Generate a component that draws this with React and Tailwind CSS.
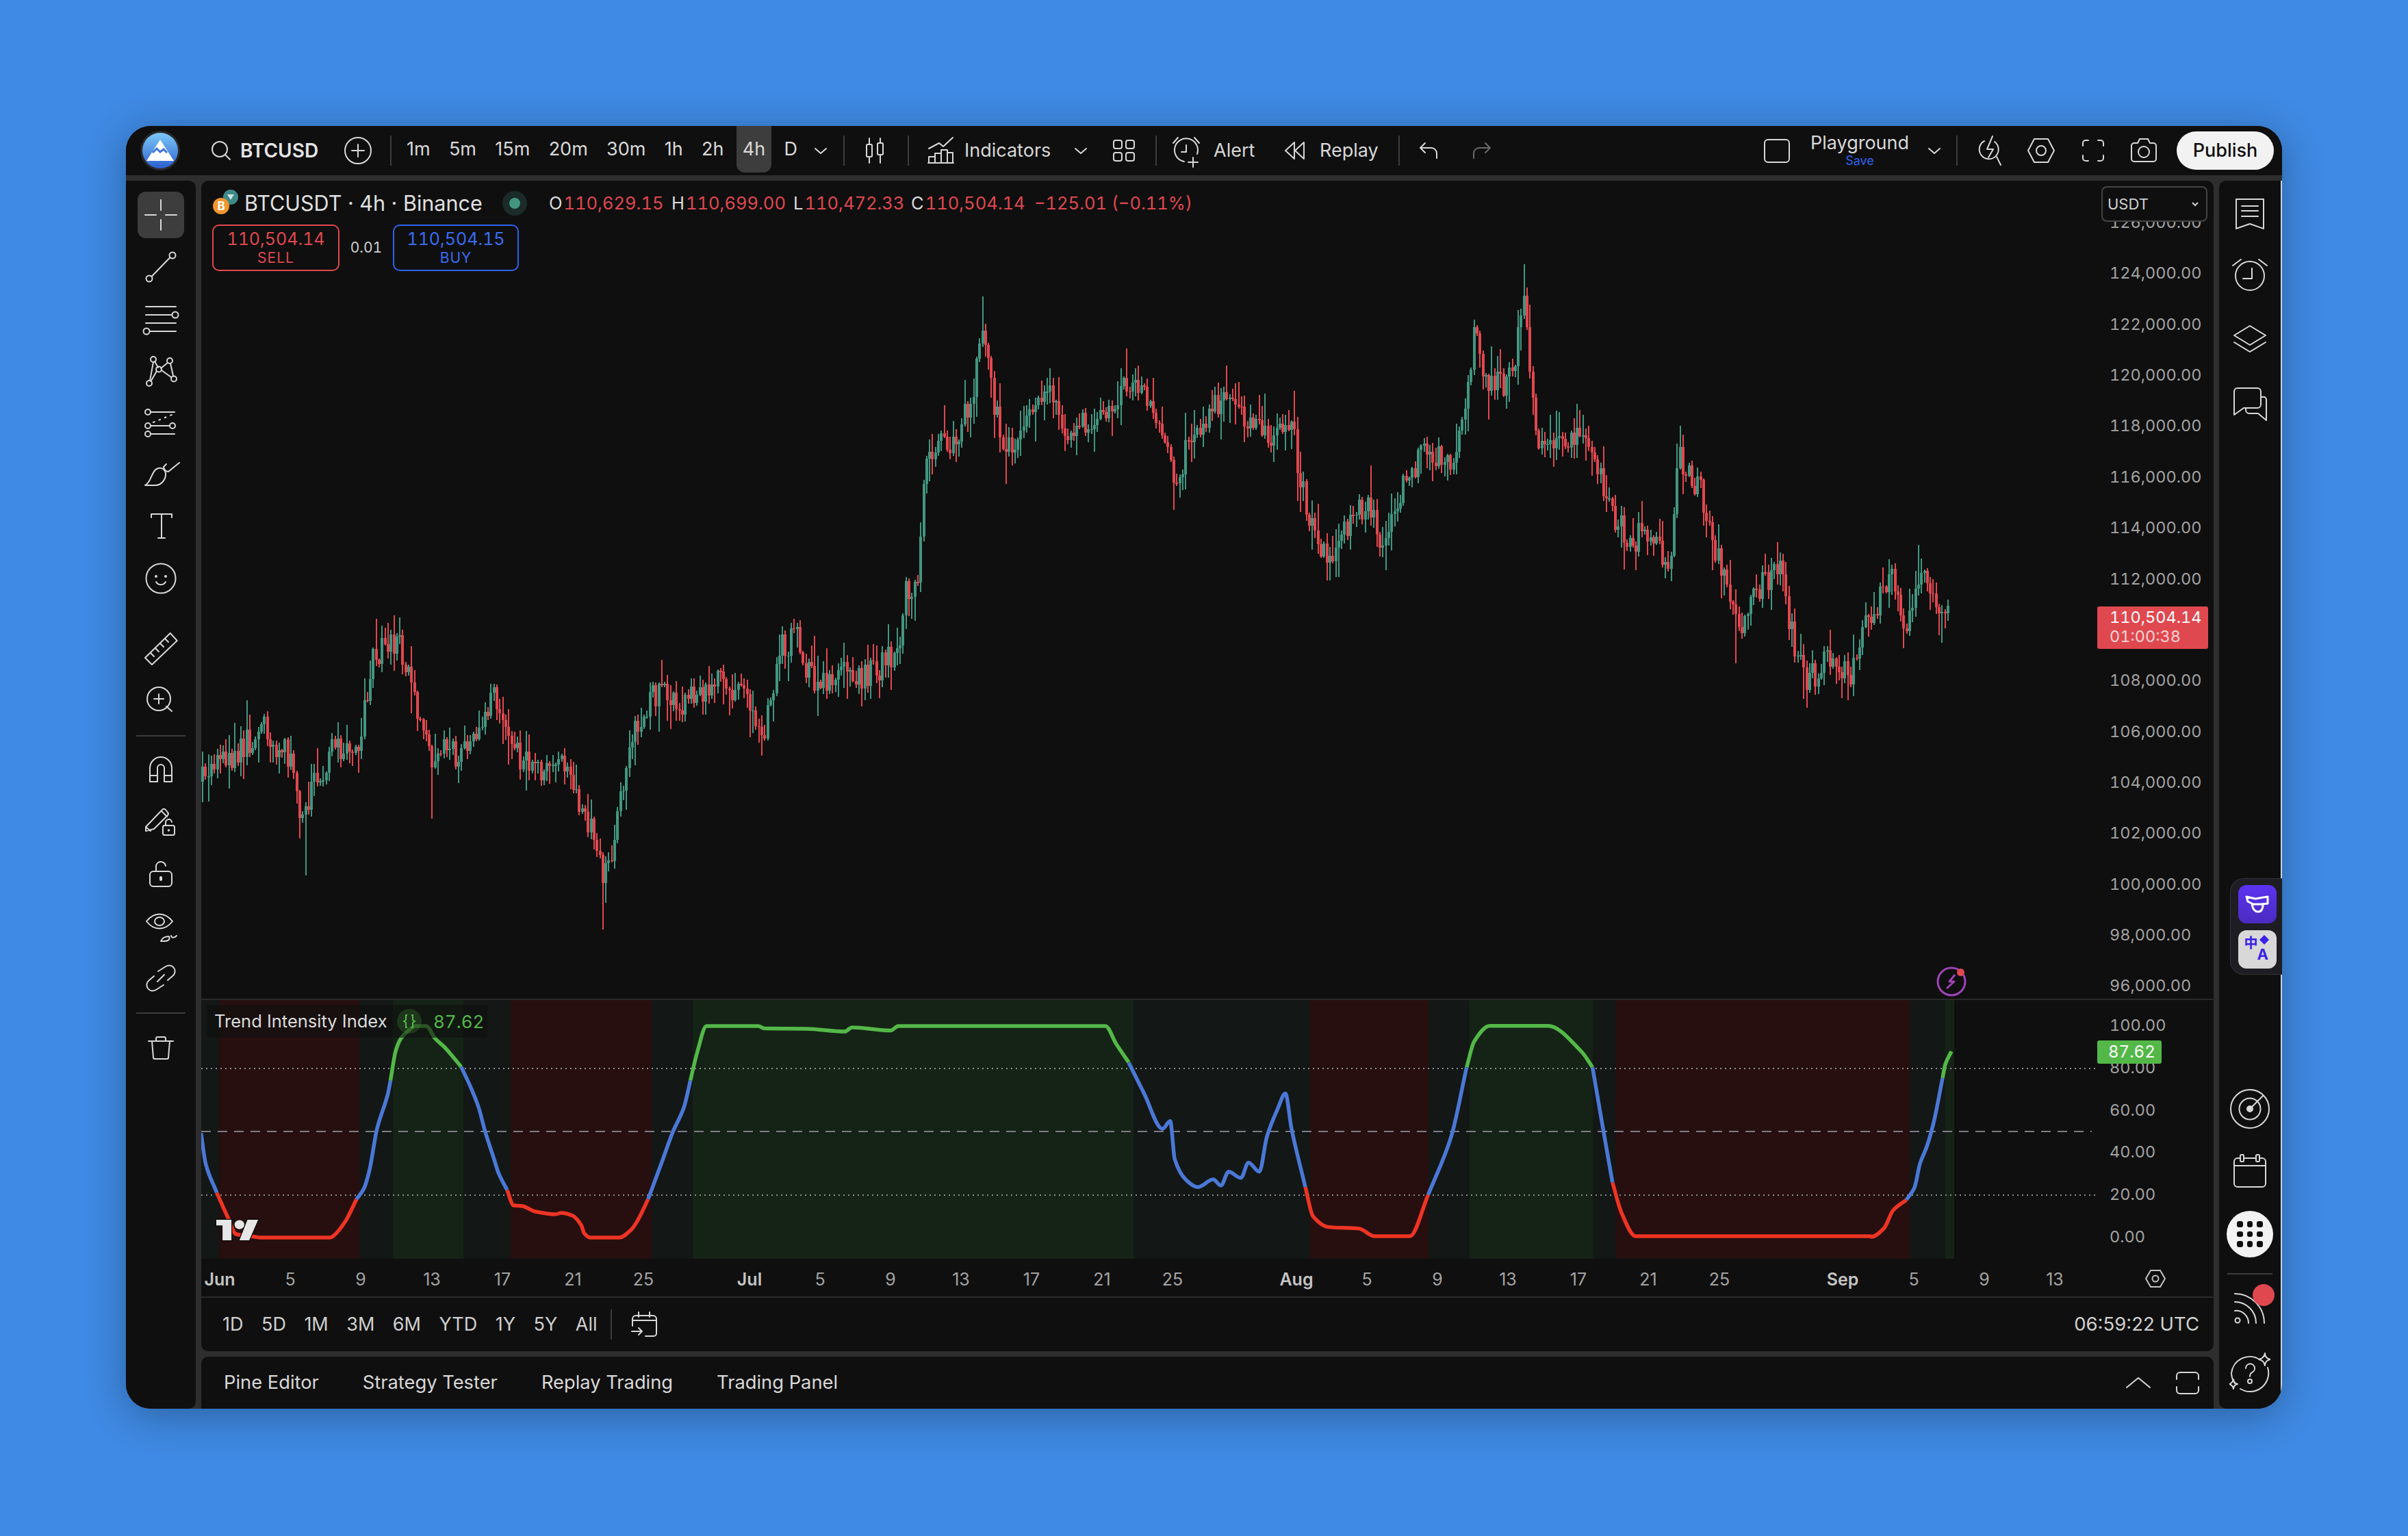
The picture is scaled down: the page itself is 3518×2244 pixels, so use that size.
import React from "react";

const S = 2.2436;
const ov = (pts) => pts.map(([x, y]) => [x * S, y * S]);

// rough price path, overview coords
const PATH = ov([
  [131, 510], [140, 495], [155, 490], [172, 475], [185, 490], [192, 505], [197, 540], [205, 510], [215, 490], [235, 480], [243, 425], [258, 415], [270, 450], [280, 497],
  [290, 490], [305, 490], [322, 450], [335, 490], [350, 500], [365, 495], [372, 515], [385, 540], [393, 575], [400, 555], [408, 490], [425, 450], [440, 458], [470, 445],
  [485, 450], [497, 480], [507, 425], [518, 415], [530, 445], [550, 440], [565, 440], [585, 425], [590, 385], [598, 380], [603, 290], [620, 288], [632, 265], [639, 210], [645, 250],
  [655, 298], [670, 265], [682, 250], [692, 280], [715, 275], [725, 258], [738, 250], [750, 265], [765, 315], [775, 285], [795, 260], [810, 275], [830, 285], [840, 270],
  [848, 320], [860, 355], [865, 368], [880, 340], [890, 330], [900, 350], [915, 315], [925, 295], [945, 300], [955, 265], [960, 218], [968, 255], [985, 245], [993, 195],
  [1000, 280], [1010, 290], [1030, 280], [1045, 320], [1060, 355], [1072, 345], [1088, 372], [1093, 298], [1110, 325], [1120, 370], [1132, 410], [1145, 385], [1158, 365],
  [1170, 430], [1178, 442], [1195, 428], [1205, 443], [1215, 405], [1232, 378], [1240, 410], [1250, 372], [1258, 395], [1270, 402],
]);

// long wicks that stick out of the path
const SPIKES = ov([
  [199, 570], [281, 533], [393, 606], [639, 193], [655, 315], [765, 332], [865, 378], [960, 208], [993, 172], [1093, 289], [1131, 432], [1175, 455], [1203, 456], [1249, 355],
  [245, 403], [172, 465], [517, 403], [497, 492], [1030, 270], [1158, 353],
]);

function priceAt(x) {
  for (let i = 1; i < PATH.length; i++) {
    if (x <= PATH[i][0]) {
      const [x0, y0] = PATH[i - 1];
      const [x1, y1] = PATH[i];
      return y0 + ((y1 - y0) * (x - x0)) / (x1 - x0);
    }
  }
  return PATH[PATH.length - 1][1];
}

function makeCandles() {
  let seed = 4711;
  const rnd = () => {
    seed = (seed * 16807) % 2147483647;
    return seed / 2147483647;
  };
  const out = [];
  let prev = priceAt(295);
  const n = Math.floor((2852 - 295) / 4.3);
  for (let i = 0; i < n; i++) {
    const x = 296 + i * 4.3;
    const close = priceAt(x) + (rnd() - 0.5) * 44;
    const open = prev;
    const top = Math.min(open, close);
    const bot = Math.max(open, close);
    let hi = top - rnd() * rnd() * 46 - 2;
    let lo = bot + rnd() * rnd() * 46 + 2;
    for (const [sx, sy] of SPIKES) {
      if (Math.abs(sx - x) < 2.2) {
        if (sy < top) hi = sy;
        else lo = sy;
      }
    }
    // keep the extremes inside the reference's range
    out.push({ x: Math.round(x), top, bot: Math.max(bot, top + 1.5), hi: Math.max(hi, 386), lo: Math.min(lo, 1358), up: close < open });
    prev = close;
  }
  return out;
}
const candles = makeCandles();

// monotone cubic through the points: smooth, but flats stay flat
function smooth(pts) {
  const s = [];
  for (let i = 0; i < pts.length - 1; i++) s.push((pts[i + 1][1] - pts[i][1]) / (pts[i + 1][0] - pts[i][0]));
  const m = pts.map((_, i) => {
    if (i === 0) return s[0];
    if (i === pts.length - 1) return s[s.length - 1];
    if (s[i - 1] * s[i] <= 0) return 0;
    return (2 * s[i - 1] * s[i]) / (s[i - 1] + s[i]);
  });
  let d = `M${pts[0][0]} ${pts[0][1]}`;
  for (let i = 0; i < pts.length - 1; i++) {
    const dx = (pts[i + 1][0] - pts[i][0]) / 3;
    d += ` C${pts[i][0] + dx} ${pts[i][1] + m[i] * dx} ${pts[i + 1][0] - dx} ${pts[i + 1][1] - m[i + 1] * dx} ${pts[i + 1][0]} ${pts[i + 1][1]}`;
  }
  return d;
}

const GREEN = "#54b848";
const BLUE = "#4a78d6";
const RED = "#ee3424";

const LINE = [
  [BLUE, [[293.7, 1655.5], [300.7, 1701], [316.7, 1742.5]]],
  [RED, [[316.7, 1742.5], [332.6, 1778], [345, 1803], [372.8, 1807], [380.5, 1808], [482.5, 1808], [488.9, 1804], [504.8, 1784], [511.2, 1772], [520.8, 1752]]],
  [BLUE, [[520.8, 1752], [531.6, 1736.6], [539.9, 1709], [550.7, 1649.6], [566.7, 1598], [570.5, 1578.4]]],
  [GREEN, [[570.5, 1578.4], [578.2, 1535], [585.8, 1517], [597.3, 1505], [606.9, 1499], [622.8, 1499], [635.6, 1517], [649.6, 1530], [661, 1543], [673.8, 1558.6]]],
  [BLUE, [[673.8, 1558.6], [686.6, 1586], [699.3, 1618], [708.9, 1653.5], [721.7, 1693], [728, 1713], [740.8, 1738.5]]],
  [RED, [[740.8, 1738.5], [750.4, 1761], [763.1, 1762], [782.2, 1770], [811, 1774], [820.5, 1772], [836.5, 1776], [849.2, 1790], [853.7, 1802], [862, 1808], [904.7, 1808], [922.6, 1796], [932.1, 1782], [946.8, 1752]]],
  [BLUE, [[946.8, 1752], [967.2, 1697], [983.1, 1653.5], [999.1, 1618], [1008.7, 1578.4]]],
  [GREEN, [[1008.7, 1578.4], [1018.2, 1539], [1032.2, 1499], [1107.5, 1499], [1117, 1502.5], [1178, 1503], [1234, 1507], [1245, 1501], [1301, 1505.5], [1312.5, 1499], [1615, 1499], [1631, 1525.6], [1649, 1552]]],
  [BLUE, ov([[735, 692], [745, 712], [757, 735], [762, 730], [765, 755], [772, 768], [780, 773], [790, 768], [795, 772], [800, 763], [808, 767], [813, 757], [820, 763], [825, 740], [832, 722], [837, 712], [841, 735], [850, 773]])],
  [RED, ov([[850, 773], [855, 792], [865, 799], [885, 800], [895, 805], [918, 805], [930, 778]])],
  [BLUE, ov([[930, 778], [945, 740], [955, 695]])],
  [GREEN, ov([[955, 695], [960, 678], [970, 668], [1008, 668], [1030, 685], [1037, 695]])],
  [BLUE, ov([[1037, 695], [1043, 730], [1050, 770]])],
  [RED, [...ov([[1050, 770], [1056, 790], [1065, 805], [1218, 805]]), [2734, 1807], [2752, 1795], [2766, 1768], [2785, 1753]]],
  [BLUE, [[2785, 1753], [2797, 1735], [2805, 1700], [2815, 1675], [2825, 1640], [2838, 1575]]],
  [GREEN, [[2838, 1575], [2842, 1555], [2851, 1536]]],
];

const N = "#131716";
const R = "#270f0f";
const G = "#152316";
const BANDS = [
  [294, 320.5, N], [320.5, 525, R], [525, 574, N], [574, 677, G], [677, 746, N], [746, 952, R], [952, 1012, N], [1012, 1656, G], [1656, 1914, N], [1914, 2087, R],
  [2087, 2147, N], [2147, 2327, G], [2327, 2360, N], [2360, 2790, R], [2790, 2842, N], [2842, 2855, G],
];

// the 110,000.00 slot sits under the live price tag
const PRICES = ["126,000.00", "124,000.00", "122,000.00", "120,000.00", "118,000.00", "116,000.00", "114,000.00", "112,000.00", "", "108,000.00", "106,000.00", "104,000.00", "102,000.00", "100,000.00", "98,000.00", "96,000.00"];

const TIME = [
  ["Jun", 321, true], ["5", 424], ["9", 527], ["13", 631], ["17", 734], ["21", 837], ["25", 940], ["Jul", 1095, true], ["5", 1198], ["9", 1301], ["13", 1404], ["17", 1507], ["21", 1610], ["25", 1713],
  ["Aug", 1894, true], ["5", 1997], ["9", 2100], ["13", 2203], ["17", 2306], ["21", 2408], ["25", 2512], ["Sep", 2692, true], ["5", 2796], ["9", 2899], ["13", 3002],
];

// all icons: 60x60 box, origin in the middle, units are screen px
function Ico({ children, stroke = "#d8d8d8", sw = 2 }) {
  return (
    <svg className="w-[60px] h-[60px] shrink-0" viewBox="-30 -30 60 60" fill="none" stroke={stroke} strokeWidth={sw} strokeLinecap="round" strokeLinejoin="round">
      {children}
    </svg>
  );
}
const Chevron = () => (
  <Ico>
    <path d="M-8 -3 L0 4 L8 -3" />
  </Ico>
);
const Divider = () => <div className="w-[2px] h-[44px] bg-[#3c3c3c] shrink-0" />;

function OHLC({ l, v, cls }) {
  return (
    <div className={cls}>
      <span className="text-[#dcdcdc]">{l}</span>
      <span className="text-[#e0484f] tabular-nums">{v}</span>
    </div>
  );
}

function Header() {
  return (
    <div className="h-[72px] shrink-0 flex items-center bg-[#0f0f0f] pl-[20px] pr-[12px] text-[27px] text-[#d8d8d8]">
      <svg className="w-[60px] h-[60px] shrink-0" viewBox="-30 -30 60 60">
        <defs>
          <linearGradient id="lg" x1="0" y1="0" x2="0" y2="1">
            <stop offset="0" stopColor="#7cc9f8" />
            <stop offset="1" stopColor="#2c5fd0" />
          </linearGradient>
        </defs>
        <circle r="29" fill="#2a2a2a" />
        <circle r="26" fill="url(#lg)" />
        <path d="M0 -16 L-20 15 H20 Z" fill="#fff" />
        <path d="M-11 3 L-5 -3 L0 2 L5 -2 L10 3" fill="none" stroke="#3c74dc" strokeWidth="3" />
      </svg>
      <div className="ml-[29px]">
        <Ico>
          <circle cx="-2" cy="-2" r="11" />
          <path d="M6 6 L13 13" />
        </Ico>
      </div>
      <span className="ml-[-2px] w-[114px] font-semibold text-[28px] text-[#e4e4e4]">BTCUSD</span>
      <div className="ml-[28px]">
        <Ico>
          <circle r="19" />
          <path d="M-9 0 H9 M0 -9 V9" />
        </Ico>
      </div>
      <div className="ml-[17px]"><Divider /></div>
      <div className="ml-[13px] w-[587px] shrink-0 h-[72px] flex items-start gap-[9.3px]">
        {["1m", "5m", "15m", "20m", "30m", "1h", "2h", "4h", "D"].map((t) => (
          <div key={t} className={"h-[68px] px-[9px] flex items-center rounded-b-[12px] " + (t === "4h" ? "bg-[#3d3d3d]" : "")}>
            {t}
          </div>
        ))}
      </div>
      <div className="ml-[-3px]"><Chevron /></div>
      <div className="ml-[3px]"><Divider /></div>
      <div className="ml-[14px]">
        <Ico>
          <path d="M-8 -18 V-9 M-8 9 V18 M8 -18 V-11 M8 6 V18" />
          <rect x="-12" y="-9" width="8" height="18" rx="1.5" />
          <rect x="4" y="-11" width="8" height="17" rx="1.5" />
        </Ico>
      </div>
      <div className="ml-[18px]"><Divider /></div>
      <div className="ml-[16px]">
        <Ico>
          <path d="M-17 -3 L-2 -11 L4 -6 L18 -19" />
          <path d="M-18 18 H19 M-17 18 V9 H-8 V18 M-8 18 V4 H1 V18 M1 18 V-1 H10 V18 M10 18 V3 H18 V18" />
        </Ico>
      </div>
      <span className="ml-[5px] w-[128px] whitespace-nowrap">Indicators</span>
      <div className="ml-[12px]"><Chevron /></div>
      <div className="ml-[3px]">
        <Ico>
          <rect x="-15" y="-15" width="12" height="12" rx="3" />
          <rect x="3" y="-15" width="12" height="12" rx="3" />
          <rect x="-15" y="3" width="12" height="12" rx="3" />
          <rect x="3" y="3" width="12" height="12" rx="3" />
        </Ico>
      </div>
      <div className="ml-[16px]"><Divider /></div>
      <div className="ml-[13px]">
        <Ico>
          <path d="M-3 16 A17 17 0 1 1 16 5" />
          <path d="M0 -8 V2 H-7" />
          <path d="M-19 -11 L-12 -19 M19 -11 L12 -19" />
          <path d="M10 10 V24 M3 17 H17" />
        </Ico>
      </div>
      <span className="ml-[10px] w-[61px]">Alert</span>
      <div className="ml-[28px]">
        <Ico>
          <path d="M-1 -12 L-14 0 L-1 12 Z M13 -12 L0 0 L13 12 Z" />
        </Ico>
      </div>
      <span className="ml-[6px] w-[87px]">Replay</span>
      <div className="ml-[28px]"><Divider /></div>
      <div className="ml-[12px]">
        <Ico>
          <path d="M-5 -11 L-12 -4 L-5 3 M-12 -4 H4 A8 8 0 0 1 12 4 V11" />
        </Ico>
      </div>
      <div className="ml-[18px]">
        <Ico stroke="#6a6a6a">
          <path d="M5 -11 L12 -4 L5 3 M12 -4 H-4 A8 8 0 0 0 -12 4 V11" />
        </Ico>
      </div>

      <div className="ml-auto flex items-center">
        <Ico>
          <rect x="-18" y="-16" width="36" height="33" rx="5" />
        </Ico>
        <div className="ml-[19px] w-[144px] flex flex-col items-center leading-none">
          <span className="text-[27px] mt-[-1px]">Playground</span>
          <span className="text-[18px] text-[#2f62f0] mt-[4px]">Save</span>
        </div>
        <div className="ml-[7px]"><Chevron /></div>
        <div className="ml-[2px]"><Divider /></div>
        <div className="ml-[18px]">
          <Ico>
            <path d="M6 -13 A14 14 0 1 1 -9 -14" />
            <path d="M9 9 L15 21" />
            <path d="M3 -21 L-5 -2 H4 L-3 10" />
          </Ico>
        </div>
        <div className="ml-[14px]">
          <Ico>
            <path d="M-19 0 L-10 -17 H10 L19 0 L10 17 H-10 Z" />
            <circle r="7" />
          </Ico>
        </div>
        <div className="ml-[16px]">
          <Ico>
            <path d="M-15 -7 V-11 A4 4 0 0 1 -11 -15 H-7 M7 -15 H11 A4 4 0 0 1 15 -11 V-7 M15 7 V11 A4 4 0 0 1 11 15 H7 M-7 15 H-11 A4 4 0 0 1 -15 11 V7" />
          </Ico>
        </div>
        <div className="ml-[14px]">
          <Ico>
            <path d="M-9 -11 L-6 -17 H6 L9 -11 H14 A4 4 0 0 1 18 -7 V12 A4 4 0 0 1 14 16 H-14 A4 4 0 0 1 -18 12 V-7 A4 4 0 0 1 -14 -11 Z" />
            <circle cy="2" r="8" />
          </Ico>
        </div>
        <div className="ml-[18px] w-[142px] h-[56px] rounded-full bg-[#f2f2f2] text-[#0f0f0f] flex items-center justify-center font-medium">Publish</div>
      </div>
    </div>
  );
}

function LeftBar() {
  const Slot = ({ cls, children }) => <div className={"flex items-center justify-center " + cls}>{children}</div>;
  const s = "h-[75.9px]";
  const m = "h-[73px]";
  const l = "h-[76.25px]";
  const Sep = ({ cls }) => <div className={"w-[72px] h-[2px] bg-[#3c3c3c] self-center " + cls} />;
  return (
    <div className="w-[102px] shrink-0 bg-[#0f0f0f] rounded-r-[10px] flex flex-col pt-[12px]">
      <Slot cls={s}>
        <div className="w-[68px] h-[68px] rounded-[12px] bg-[#3d3d3d] flex items-center justify-center">
          <Ico>
            <path d="M0 -22 V-7 M0 7 V22 M-23 0 H-7 M7 0 H23" />
          </Ico>
        </div>
      </Slot>
      <Slot cls={s}>
        <Ico>
          <circle cx="17" cy="-17" r="4.5" />
          <circle cx="-17" cy="17" r="4.5" />
          <path d="M-13.5 14 L13.5 -14" />
        </Ico>
      </Slot>
      <Slot cls={s}>
        <Ico>
          <path d="M-22 -18 H22 M-22 -6 H16 M-22 6 H22 M-16 18 H22" />
          <circle cx="21" cy="-6" r="4.5" />
          <circle cx="-21" cy="18" r="4.5" />
        </Ico>
      </Slot>
      <Slot cls={s}>
        <Ico>
          <path d="M-11 -13 L-16 14 M-9 -14 L-4 -5 M0 -4 L10 -12 M14 -11 L18 7 M1 -1 L15 9 M-6 0 L-14 14" />
          <circle cx="-11" cy="-17" r="4" />
          <circle cx="13" cy="-15" r="4" />
          <circle cx="-3" cy="-2.5" r="4" />
          <circle cx="-17" cy="18" r="4" />
          <circle cx="19" cy="11.5" r="4" />
        </Ico>
      </Slot>
      <Slot cls={s}>
        <Ico>
          <circle cx="-19" cy="-16" r="4" />
          <circle cx="-19" cy="4" r="4" />
          <circle cx="17" cy="4" r="4" />
          <circle cx="-19" cy="16" r="4" />
          <path d="M-15 -16 H20 M-15 4 H13 M-15 16 H20" />
          <path d="M-11 -1 L16 -12" strokeDasharray="2 7" />
        </Ico>
      </Slot>
      <Slot cls={s}>
        <Ico>
          <path d="M-23 16 C-14 12 -14 -4 -6 -8 C2 -12 6 -6 7 -2 C8 8 0 16 -8 16 Z" />
          <path d="M8 -15 L4 -11 C5 -5 8 -4 11 -4 L27 -17" />
        </Ico>
      </Slot>
      <Slot cls={s}>
        <Ico>
          <path d="M-14 -13 V-18 H16 V-13 M1 -18 V17 M-4 17 H6" />
        </Ico>
      </Slot>
      <Slot cls={s}>
        <Ico>
          <circle r="21.5" />
          <circle cx="-7" cy="-3" r="1" fill="#d8d8d8" />
          <circle cx="7" cy="-3" r="1" fill="#d8d8d8" />
          <path d="M-7 5 A8 8 0 0 0 7 5" />
        </Ico>
      </Slot>

      <Slot cls={m + " mt-[28px]"}>
        <Ico>
          <path d="M13.7 -23 L23.7 -12 L-13 23 L-23 13 Z" />
          <path d="M-15 6 L-10 11 M-8 -1 L-3 4 M-1 -8 L4 -3 M6 -15 L11 -10" />
        </Ico>
      </Slot>
      <Slot cls={m}>
        <Ico>
          <circle cx="-3" r="17" />
          <path d="M-10 0 H4 M-3 -7 V7 M8 11 L16 18" />
        </Ico>
      </Slot>
      <Sep cls="mt-[17px]" />
      <Slot cls={l + " mt-[10px]"}>
        <Ico>
          <path d="M-16 18 V-2 A16 16 0 0 1 16 -2 V18 H5 V-2 A5 5 0 0 0 -5 -2 V18 Z M-16 9 H-5 M5 9 H16" />
        </Ico>
      </Slot>
      <Slot cls={l}>
        <Ico>
          <path d="M-22 7 L2 -18 A3 3 0 0 1 7 -18 L10 -14 A3 3 0 0 1 10 -10 L-10 10 L-22 13 Z M-22 7 L-15 13 M1 -16 L9 -8" />
          <rect x="3" y="5" width="17" height="14" rx="2.5" />
          <path d="M7 5 V1 A4.5 4.5 0 0 1 16 0" />
          <circle cx="11.5" cy="12" r="0.8" />
        </Ico>
      </Slot>
      <Slot cls={l}>
        <Ico>
          <rect x="-16" y="-4" width="32" height="22" rx="5" />
          <path d="M-7 -4 V-10 A7 7 0 0 1 7 -12" />
          <path d="M0 5 V8" strokeWidth="4" />
        </Ico>
      </Slot>
      <Slot cls={l}>
        <Ico>
          <path d="M-21 -7 C-10 -21 6 -21 17 -7 C6 7 -10 7 -21 -7 Z" />
          <ellipse cx="-2" cy="-7" rx="7" ry="6" />
          <path d="M0 22 C2 17 6 15 12 15 C14 20 10 22 5 22 Z M15 14 C16 18 20 17 23 14" />
        </Ico>
      </Slot>
      <Slot cls={l}>
        <Ico>
          <path d="M-10 -3 L-17 3 A8.5 8.5 0 0 0 -7 17 L4 10 M10 3 L17 -3 A8.5 8.5 0 0 0 7 -17 L-4 -10 M-5 5 L5 -5" />
        </Ico>
      </Slot>
      <Sep cls="mt-[12px]" />
      <Slot cls="h-[76px] mt-[9px]">
        <Ico>
          <path d="M-18 -7 H18 M-13 -7 L-11 17 A2 2 0 0 0 -9 19 H9 A2 2 0 0 0 11 17 L13 -7 M-7 -7 V-11 A2 2 0 0 1 -5 -13 H5 A2 2 0 0 1 7 -11 V-7" />
        </Ico>
      </Slot>
    </div>
  );
}

function MainPane() {
  return (
    <div className="h-[1195px] shrink-0 flex relative overflow-hidden">
      <div className="w-[2772px] shrink-0 relative">
        <svg className="w-[2772px] h-[1195px] block" viewBox="294 264 2772 1195" shapeRendering="crispEdges">
          {candles.map((c, i) => (
            <g key={i} fill={c.up ? "#429681" : "#e0484f"}>
              <rect x={c.x - 1} y={c.hi} width="2" height={c.lo - c.hi} />
              <rect x={c.x - 2} y={c.top} width="4" height={c.bot - c.top} />
            </g>
          ))}
        </svg>

        <div className="absolute left-[16px] top-[12px] h-[42px] flex items-center whitespace-nowrap">
          <svg className="w-[44px] h-[44px] shrink-0" viewBox="0 0 44 44">
            <circle cx="27" cy="13" r="11" fill="#3f8a88" />
            <path d="M22 9 H32 L27 17 Z" fill="#cfe8e6" />
            <circle cx="13" cy="26" r="12" fill="#f0962e" />
            <text x="13" y="32" fontSize="17" fontWeight="700" textAnchor="middle" fill="#fff" fontFamily="Inter, sans-serif">B</text>
          </svg>
          <span className="ml-[3px] w-[346px] text-[30.5px] text-[#e0e0e0]">BTCUSDT · 4h · Binance</span>
          <div className="ml-[31px] w-[36px] h-[36px] rounded-full bg-[#1a2b28] flex items-center justify-center">
            <div className="w-[16px] h-[16px] rounded-full bg-[#429681]" />
          </div>
          <div className="ml-[32px] flex text-[25.5px] items-center">
            <OHLC l="O" v="110,629.15" cls="flex gap-[2px] w-[179px]" />
            <OHLC l="H" v="110,699.00" cls="flex gap-[2px] w-[178px]" />
            <OHLC l="L" v="110,472.33" cls="flex gap-[2px] w-[172px]" />
            <OHLC l="C" v="110,504.14" cls="flex gap-[2px] w-[180px]" />
            <span className="text-[#e0484f] tabular-nums">−125.01 (−0.11%)</span>
          </div>
        </div>

        <div className="absolute left-[16px] top-[64px] flex items-center tabular-nums">
          <div className="w-[186px] h-[68px] rounded-[10px] border-2 border-[#e0484f] text-[#e0484f] flex flex-col items-center justify-center leading-none">
            <span className="text-[25px]">110,504.14</span>
            <span className="text-[21px] mt-[4px] tracking-[1px]">SELL</span>
          </div>
          <span className="w-[78px] text-center text-[21px] text-[#cfcfcf]">0.01</span>
          <div className="w-[184px] h-[68px] rounded-[10px] border-2 border-[#2f62f0] text-[#3a6cf4] flex flex-col items-center justify-center leading-none">
            <span className="text-[25px]">110,504.15</span>
            <span className="text-[21px] mt-[4px] tracking-[1px]">BUY</span>
          </div>
        </div>

        <svg className="absolute left-[2529px] top-[1142px] w-[56px] h-[56px]" viewBox="-28 -28 56 56" fill="none">
          <circle r="20" stroke="#9c44b5" strokeWidth="3" />
          <path d="M5 -10 L-3 0 H4 L-7 10 M-6 -1" stroke="#9c44b5" strokeWidth="3" strokeLinejoin="round" />
          <circle cx="13.5" cy="-13.5" r="5.5" fill="#e0484f" />
        </svg>
      </div>

      <div className="flex-1 pt-[23.5px] pl-[16px] text-[23.5px] tabular-nums text-[#a3a3a3]">
        {PRICES.map((p, i) => (
          <div key={i} className="h-[74.36px] flex items-center">{p}</div>
        ))}
      </div>

      <div className="absolute left-[2776px] top-[8px] w-[155px] h-[52px] rounded-[8px] border-2 border-[#444444] bg-[#0f0f0f] flex items-center justify-between pl-[7px] pr-[4px] text-[22px] text-[#cfcfcf]">
        USDT
        <svg className="w-[24px] h-[24px]" viewBox="-12 -12 24 24" fill="none" stroke="#cfcfcf" strokeWidth="2">
          <path d="M-4 -2 L0 2 L4 -2" />
        </svg>
      </div>
      <div className="absolute left-[2770px] top-[622px] w-[162px] h-[62px] rounded-[3px] bg-[#e0484f] pl-[18px] pt-[2px] text-[23.5px] leading-[28px] tabular-nums text-white">
        <div>110,504.14</div>
        <div className="text-[#f6d4d6]">01:00:38</div>
      </div>
    </div>
  );
}

function IndicatorPane() {
  return (
    <div className="h-[378px] shrink-0 flex relative overflow-hidden">
      <div className="w-[2772px] shrink-0 relative">
        <svg className="w-[2772px] h-[378px] block" viewBox="294 1461 2772 378" fill="none">
          {BANDS.map(([a, b, c]) => (
            <rect key={a} x={a} y="1461" width={b - a} height="378" fill={c} />
          ))}
          <path d="M294 1561 H3064 M294 1746 H3064" stroke="#8c8c8c" strokeWidth="2" strokeDasharray="2 5" />
          <path d="M294 1653 H3056" stroke="#7d7d85" strokeWidth="2" strokeDasharray="14 10" />
          {LINE.map(([color, pts], i) => (
            <path key={i} d={smooth(pts)} stroke={color} strokeWidth="5.5" strokeLinejoin="round" strokeLinecap="butt" />
          ))}
          <g transform="translate(316 1773.5) scale(1.3 1.2)">
            <path d="M14 32 H7 V14 H0 V7 H17 V32 Z M37 32 H26 L35 7 H47 L37 32 Z" fill="#e6e6e6" stroke="#0a0a0a" strokeWidth="2" paintOrder="stroke" />
            <circle cx="26" cy="13" r="5.5" fill="#e6e6e6" />
          </g>
        </svg>

        <div className="absolute left-[8px] top-[7px] w-[410px] h-[48px] bg-[#0f0f0f]/60 flex items-center pl-[11px] whitespace-nowrap">
          <span className="w-[267px] text-[25.5px] text-[#dcdcdc]">Trend Intensity Index</span>
          <div className="w-[36px] h-[36px] rounded-full bg-[#54b848]/20 flex items-center justify-center">
            <svg className="w-[24px] h-[24px]" viewBox="-12 -12 24 24" fill="none" stroke="#54b848" strokeWidth="2">
              <path d="M-3 -9 H-5 L-5 -2 L-8 0 L-5 2 V9 H-3 M3 -9 H5 V-2 L8 0 L5 2 V9 H3" />
            </svg>
          </div>
          <span className="ml-[17px] text-[26px] tabular-nums text-[#54b848]">87.62</span>
        </div>
      </div>
      <div className="flex-1 pt-[6px] pl-[16px] text-[23.5px] tabular-nums text-[#a3a3a3]">
        {["100.00", "80.00", "60.00", "40.00", "20.00", "0.00"].map((p) => (
          <div key={p} className="h-[61.7px] flex items-center">{p}</div>
        ))}
      </div>
      <div className="absolute left-[2770px] top-[59px] w-[94px] h-[34px] rounded-[3px] bg-[#54b848] flex items-center pl-[16px] text-[24px] tabular-nums text-white">87.62</div>
    </div>
  );
}

function TimeAxis() {
  return (
    <div className="h-[57px] shrink-0 relative border-b-2 border-[#2a2a2a] text-[25px] text-[#a3a3a3]">
      {TIME.map(([t, x, bold]) => (
        <span key={t + x} className={"absolute top-[12px] -translate-x-1/2 " + (bold ? "font-semibold text-[#c4c4c4]" : "")} style={{ left: x - 294 }}>
          {t}
        </span>
      ))}
      <div className="absolute left-[2825px] top-0 h-[57px] flex items-center">
        <svg className="w-[60px] h-[60px]" viewBox="-30 -30 60 60" fill="none" stroke="#c4c4c4" strokeWidth="2">
          <path d="M-14 0 L-7 -12 H7 L14 0 L7 12 H-7 Z" />
          <circle r="4.5" />
        </svg>
      </div>
    </div>
  );
}

function RangeBar() {
  return (
    <div className="flex-1 flex items-center text-[27px] text-[#d0d0d0] pl-[31px] pr-[21px]">
      <div className="flex gap-[26.5px] w-[547px]">
        {["1D", "5D", "1M", "3M", "6M", "YTD", "1Y", "5Y", "All"].map((t) => (
          <span key={t}>{t}</span>
        ))}
      </div>
      <div className="ml-[20px]"><Divider /></div>
      <div className="ml-[17px]">
        <Ico>
          <path d="M-17 2 V-8 A5 5 0 0 1 -12 -13 H13 A5 5 0 0 1 18 -8 V13 A4 4 0 0 1 14 17 H2 M-17 -6 H18 M-8 -18 V-11 M8 -18 V-11" />
          <path d="M-18 10 H-3 M-8 5 L-3 10 L-8 15" />
        </Ico>
      </div>
      <span className="ml-auto text-[27.5px]">06:59:22 UTC</span>
    </div>
  );
}

function BottomPanel() {
  return (
    <div className="h-[76px] shrink-0 bg-[#0f0f0f] rounded-t-[10px] flex items-center pl-[33px] text-[27.3px] text-[#d8d8d8]">
      <div className="flex gap-[64px]">
        <span>Pine Editor</span>
        <span>Strategy Tester</span>
        <span>Replay Trading</span>
        <span>Trading Panel</span>
      </div>
      <div className="ml-auto flex items-center pr-[8px]">
        <Ico>
          <path d="M-17 7 L0 -7 L17 7" />
        </Ico>
        <div className="ml-[12px]">
          <Ico>
            <path d="M-16 -5 V-10 A5 5 0 0 1 -11 -15 H11 A5 5 0 0 1 16 -10 V-5 M-16 6 V11 A5 5 0 0 0 -11 16 H11 A5 5 0 0 0 16 11 V6" />
          </Ico>
        </div>
      </div>
    </div>
  );
}

function RightBar() {
  const Slot = ({ cls, children }) => <div className={"flex items-center justify-center " + cls}>{children}</div>;
  return (
    <div className="w-[92px] shrink-0 bg-[#0f0f0f] rounded-l-[10px] border-r-2 border-[#c5d3df] flex flex-col relative">
      <Slot cls="h-[60px] mt-[19px]">
        <Ico>
          <path d="M-20 -22 H20 V21 L0 14 L-20 21 Z M-12 -12 H12 M-12 -5 H12 M-12 3 H12" />
        </Ico>
      </Slot>
      <Slot cls="h-[60px] mt-[29px]">
        <Ico>
          <circle cy="1" r="21" />
          <path d="M3 -10 V5 H-10 M-25 -14 L-13 -23 M25 -14 L13 -23" />
        </Ico>
      </Slot>
      <Slot cls="h-[60px] mt-[33px]">
        <Ico>
          <path d="M-23 -5 L0 -19 L23 -5 L0 9 Z M-23 5 L0 19 L23 5" />
        </Ico>
      </Slot>
      <Slot cls="h-[60px] mt-[35px]">
        <Ico>
          <path d="M-23 16 V-18 A5 5 0 0 1 -18 -23 H11 A5 5 0 0 1 16 -18 V1 A5 5 0 0 1 11 6 H-9 Z" />
          <path d="M16 -10 H19 A4 4 0 0 1 24 -6 V24 L12 14 H-1 A5 5 0 0 1 -6 9 V6" />
        </Ico>
      </Slot>

      <div className="mt-[663px] ml-[16px] w-[76px] h-[141px] rounded-l-[20px] bg-[#1e1d24] border border-r-0 border-[#33323a] flex flex-col items-center gap-[10px] pt-[9px] pl-[2px]">
        <div className="w-[56px] h-[56px] rounded-[12px] bg-gradient-to-b from-[#5c33f2] to-[#4a2bc0] flex items-center justify-center">
          <svg className="w-[40px] h-[36px]" viewBox="-20 -18 40 36" fill="none" stroke="#fff" strokeWidth="3" strokeLinejoin="round">
            <path d="M-16 -11 L-3 -8 L15 -11 L15 -1 L5 0 L-6 0 L-14 -4 Z" />
            <path d="M-8 0 C-7 6 -4 11 1 11 C6 11 8 7 8 0" />
          </svg>
        </div>
        <div className="w-[56px] h-[56px] rounded-[12px] bg-[#d8d8d8] relative leading-none text-[#3a22e8] font-bold">
          <span className="absolute left-[9px] top-[8px] text-[20px] font-['Noto_Sans_CJK_SC',sans-serif]">中</span>
          <span className="absolute left-[28px] top-[24px] text-[22px]">A</span>
          <svg className="absolute left-[31px] top-[7px] w-[14px] h-[14px]" viewBox="0 0 14 14" fill="#3a22e8">
            <path d="M7 0 L14 7 L7 14 L0 7 Z" />
          </svg>
        </div>
      </div>

      <Slot cls="h-[60px] mt-[166px]">
        <Ico>
          <circle r="28" />
          <circle r="15.5" />
          <circle r="4" fill="#d8d8d8" />
          <path d="M0 0 L19 -19" />
        </Ico>
      </Slot>
      <Slot cls="h-[60px] mt-[31px]">
        <Ico>
          <rect x="-23" y="-19" width="46" height="42" rx="5" />
          <path d="M-23 -8 H23" />
          <rect x="-14" y="-24" width="5" height="10" rx="1.5" fill="#0f0f0f" />
          <rect x="9" y="-24" width="5" height="10" rx="1.5" fill="#0f0f0f" />
        </Ico>
      </Slot>
      <div className="mt-[28px] w-[68px] h-[68px] self-center rounded-full bg-[#f2f2f2] grid grid-cols-3 gap-[6px] p-[15px]">
        {[1, 2, 3, 4, 5, 6, 7, 8, 9].map((i) => (
          <div key={i} className="rounded-[3px] bg-[#0f0f0f]" />
        ))}
      </div>
      <div className="mt-[23px] w-[66px] h-[2px] self-center bg-[#3c3c3c]" />
      <Slot cls="h-[60px] mt-[19px] relative">
        <Ico>
          <circle cx="-18" cy="18" r="3.5" />
          <path d="M-22 4 A18 18 0 0 1 -2 22 M-22 -9 A31 31 0 0 1 9 22 M-22 -21 A43 43 0 0 1 21 22" />
        </Ico>
        <div className="absolute left-[49px] top-[-5px] w-[32px] h-[32px] rounded-full bg-[#e0484f]" />
      </Slot>
      <Slot cls="h-[60px] mt-[35px]">
        <Ico>
          <path d="M14 -20 A27 27 0 0 0 -27 0 A27 27 0 0 0 -22 15 M-14 23 A27 27 0 0 0 26 -8" />
          <path d="M-6 -7 A6.5 6.5 0 1 1 3 -1 C0 1 0 3 0 5" />
          <circle cy="12" r="3" />
          <path d="M22 -29 C22 -24 25 -21 30 -20 C25 -19 22 -16 22 -11 C21 -16 18 -19 13 -20 C18 -21 21 -24 22 -29 Z" />
          <path d="M-24 9 C-24 13 -22 15 -18 16 C-22 17 -24 19 -24 23 C-25 19 -27 17 -30 16 C-27 15 -25 13 -24 9 Z" />
        </Ico>
      </Slot>
    </div>
  );
}

export default function App() {
  return (
    <div className="w-[3518px] h-[2244px] bg-[#3f8ae4] pt-[184px] pl-[184px] overflow-hidden font-[Inter,sans-serif]">
      <div className="w-[3150px] h-[1874px] rounded-[36px] bg-[#2e2e2e] overflow-hidden flex flex-col shadow-[0_10px_60px_rgba(0,0,0,0.3)]">
        <Header />
        <div className="flex-1 flex gap-[8px] pt-[8px] min-h-0">
          <LeftBar />
          <div className="w-[2940px] shrink-0 flex flex-col gap-[8px]">
            <div className="h-[1710px] shrink-0 bg-[#0f0f0f] rounded-b-[10px] rounded-t-[10px] flex flex-col overflow-hidden">
              <MainPane />
              <div className="h-[2px] shrink-0 bg-[#2a2a2a]" />
              <IndicatorPane />
              <TimeAxis />
              <RangeBar />
            </div>
            <BottomPanel />
          </div>
          <RightBar />
        </div>
      </div>
    </div>
  );
}
